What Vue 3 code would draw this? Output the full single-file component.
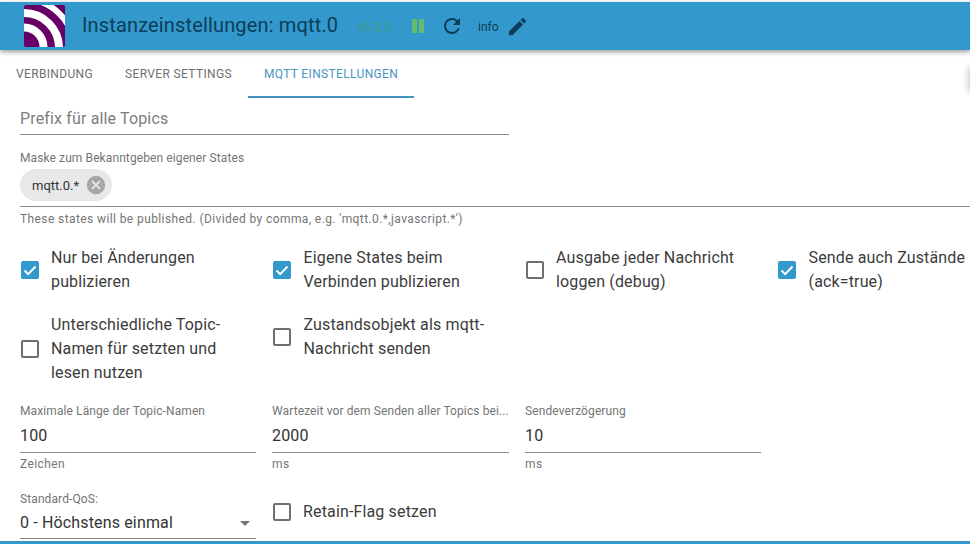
<script setup>
const tabs = [
  { label: 'Verbindung', active: false },
  { label: 'Server settings', active: false },
  { label: 'MQTT Einstellungen', active: true }
];

const flags = [
  { label: 'Nur bei Änderungen publizieren', checked: true },
  { label: 'Eigene States beim Verbinden publizieren', checked: true },
  { label: 'Ausgabe jeder Nachricht loggen (debug)', checked: false },
  { label: 'Sende auch Zustände (ack=true)', checked: true },
  { label: 'Unterschiedliche Topic-Namen für setzten und lesen nutzen', checked: false },
  { label: 'Zustandsobjekt als mqtt-Nachricht senden', checked: false }
];

const numbers = [
  { label: 'Maximale Länge der Topic-Namen', value: '100', unit: 'Zeichen' },
  { label: 'Wartezeit vor dem Senden aller Topics bei...', value: '2000', unit: 'ms' },
  { label: 'Sendeverzögerung', value: '10', unit: 'ms' }
];
</script>

<template>
  <div class="page">
    <header class="topbar">
      <svg class="logo" viewBox="0 0 41 42" width="41" height="42">
        <clipPath id="logo-clip">
          <rect width="41" height="42" rx="2" />
        </clipPath>
        <g clip-path="url(#logo-clip)">
          <rect width="41" height="42" fill="#660066" />
          <g fill="none" stroke="#fff">
            <circle cx="0" cy="42" r="19.5" stroke-width="8" />
            <circle cx="0" cy="43" r="35" stroke-width="8" />
            <circle cx="0" cy="44" r="50" stroke-width="6" />
          </g>
        </g>
      </svg>
      <h1 class="title">Instanzeinstellungen: mqtt.0</h1>
      <span class="version">v5.2.0</span>
      <svg class="pause" viewBox="0 0 12 14" width="12" height="14">
        <rect x="0" y="0" width="5" height="14" fill="#66bb6a" />
        <rect x="7" y="0" width="5" height="14" fill="#66bb6a" />
      </svg>
      <svg class="reload" viewBox="0 0 24 24" width="24" height="24">
        <path d="M17.65 6.35A7.95 7.95 0 0 0 12 4a8 8 0 1 0 7.73 10h-2.08A6 6 0 1 1 12 6c1.66 0 3.14.69 4.22 1.78L13 11h7V4l-2.35 2.35z" fill="#0d3d59" />
      </svg>
      <span class="info">info</span>
      <svg class="edit" viewBox="0 0 24 24" width="23" height="23">
        <path d="M3 17.25V21h3.75L17.81 9.94l-3.75-3.75L3 17.25zM20.71 7.04a1 1 0 0 0 0-1.41l-2.34-2.34a1 1 0 0 0-1.41 0l-1.83 1.83 3.75 3.75 1.83-1.83z" fill="#0d3d59" />
      </svg>
    </header>

    <nav class="tabs">
      <div v-for="tab in tabs" :key="tab.label" class="tab" :class="{ active: tab.active }">{{ tab.label }}</div>
    </nav>
    <div class="edge-shadow"></div>

    <main class="content">
      <div class="field prefix">
        <div class="input placeholder">Prefix für alle Topics</div>
      </div>

      <div class="mask">
        <div class="small-label">Maske zum Bekanntgeben eigener States</div>
        <div class="chip-row">
          <span class="chip">
            mqtt.0.*
            <svg viewBox="0 0 24 24" width="22" height="22">
              <path d="M12 2a10 10 0 1 0 0 20 10 10 0 0 0 0-20zm5 13.59L15.59 17 12 13.41 8.41 17 7 15.59 10.59 12 7 8.41 8.41 7 12 10.59 15.59 7 17 8.41 13.41 12 17 15.59z" fill="#a6a6a6" />
            </svg>
          </span>
        </div>
        <div class="helper">These states will be published. (Divided by comma, e.g. 'mqtt.0.*,javascript.*')</div>
      </div>

      <div class="flag-grid">
        <label v-for="flag in flags" :key="flag.label" class="flag">
          <span class="box" :class="{ checked: flag.checked }">
            <svg v-if="flag.checked" viewBox="0 0 18 18" width="18" height="18">
              <path d="M3.5 9.5l3.7 3.6 7.3-7.6" fill="none" stroke="#fff" stroke-width="2" />
            </svg>
          </span>
          <span class="flag-text">{{ flag.label }}</span>
        </label>
      </div>

      <div class="number-grid">
        <div v-for="num in numbers" :key="num.label" class="number">
          <div class="small-label">{{ num.label }}</div>
          <div class="number-value">{{ num.value }}</div>
          <div class="helper">{{ num.unit }}</div>
        </div>
      </div>

      <div class="qos-row">
        <div class="qos">
          <div class="small-label">Standard-QoS:</div>
          <div class="select">
            0 - Höchstens einmal
            <span class="arrow"></span>
          </div>
        </div>
        <label class="flag retain">
          <span class="box"></span>
          <span class="flag-text">Retain-Flag setzen</span>
        </label>
      </div>
    </main>

    <div class="bottom-bar"></div>
  </div>
</template>

<style>
html, body {
  margin: 0;
  background: #fff;
  overflow: hidden;
}
</style>

<style scoped>
.page {
  position: relative;
  width: 970px;
  height: 544px;
  overflow: hidden;
  font-family: Roboto, "Liberation Sans", sans-serif;
  color: #333;
  padding-top: 2px;
  box-sizing: border-box;
}

.topbar {
  position: relative;
  z-index: 1;
  height: 48px;
  background: #3399cc;
  box-shadow: 0 2px 5px rgba(0, 0, 0, 0.4);
  display: flex;
  align-items: center;
}

.logo {
  margin-left: 24px;
  flex: none;
}

.title {
  margin: 0 0 2px 17px;
  width: 255px;
  font-size: 20px;
  font-weight: 400;
  letter-spacing: 0.15px;
  color: #0d3d59;
  white-space: nowrap;
}

.version {
  margin: 2px 0 0 20px;
  width: 34px;
  font-size: 12px;
  letter-spacing: 0.4px;
  color: #3a9a80;
}

.pause {
  margin-left: 21px;
}

.reload {
  margin-left: 16px;
}

.info {
  margin: 1px 0 0 14px;
  font-size: 12px;
  color: #0d3d59;
}

.edit {
  margin-left: 7px;
}

.tabs {
  display: flex;
  height: 48px;
}

.tab {
  padding: 0 16px;
  display: flex;
  align-items: center;
  font-size: 12px;
  letter-spacing: 0.35px;
  text-transform: uppercase;
  color: #6f6f6f;
  box-sizing: border-box;
  height: 48px;
}

.tab.active {
  color: #4a94bf;
  border-bottom: 2px solid #4593bf;
  padding-top: 2px;
}

.edge-shadow {
  position: absolute;
  right: -6px;
  top: 66px;
  width: 8px;
  height: 26px;
  border-radius: 4px;
  background: #ccc;
  filter: blur(3px);
}

.content {
  padding: 0 0 0 20px;
}

.prefix {
  width: 489px;
  padding-top: 9px;
}

.input {
  height: 27px;
  border-bottom: 1px solid #8c8c8c;
  font-size: 16px;
  line-height: 24px;
  letter-spacing: 0.15px;
}

.placeholder {
  color: #7d7d7d;
}

.mask {
  margin-top: 15px;
}

.small-label {
  font-size: 12px;
  line-height: 16px;
  letter-spacing: 0.1px;
  color: #757575;
  white-space: nowrap;
}

.chip-row {
  border-bottom: 1px solid #8c8c8c;
  height: 37px;
  margin-top: 3px;
}

.chip {
  display: inline-flex;
  align-items: center;
  height: 32px;
  border-radius: 16px;
  background: #e8e8e8;
  padding: 0 5px 0 12px;
  font-size: 13px;
  gap: 6px;
  color: #333;
}

.chip svg {
  flex: none;
}

.helper {
  margin-top: 5px;
  font-size: 12px;
  line-height: 14px;
  color: #757575;
  letter-spacing: 0.4px;
}

.flag-grid {
  margin-top: 20px;
  display: grid;
  grid-template-columns: repeat(4, 252.5px);
  row-gap: 19px;
  align-items: start;
}

.flag {
  display: flex;
  align-items: center;
  gap: 12.5px;
  padding-right: 20px;
}

.box {
  flex: none;
  width: 18px;
  height: 18px;
  margin-left: 0.5px;
  box-sizing: border-box;
  border: 2px solid #6f6f6f;
  border-radius: 2px;
  display: block;
}

.box.checked {
  background: #3399cc;
  border: none;
}

.box svg {
  display: block;
}

.flag-text {
  font-size: 16px;
  line-height: 24px;
  letter-spacing: 0.15px;
  color: #3c3c3c;
}

.number-grid {
  margin-top: 18px;
  display: grid;
  grid-template-columns: 236px 237px 236px;
  column-gap: 16px;
}

.number-value {
  height: 32px;
  margin-top: 1px;
  font-size: 16px;
  line-height: 31px;
  letter-spacing: 0.15px;
  border-bottom: 1px solid #8c8c8c;
}

.number .helper {
  margin-top: 4px;
}

.qos-row {
  margin-top: 20px;
  display: flex;
  gap: 16px;
  align-items: flex-start;
}

.qos {
  width: 236px;
  flex: none;
}

.select {
  position: relative;
  height: 31px;
  line-height: 32px;
  font-size: 16px;
  letter-spacing: 0.15px;
  border-bottom: 1px solid #8c8c8c;
  color: #333;
}

.arrow {
  position: absolute;
  right: 6px;
  top: 14px;
  width: 0;
  height: 0;
  border-left: 5px solid transparent;
  border-right: 5px solid transparent;
  border-top: 5px solid #757575;
}

.retain {
  margin-top: 9px;
}

.bottom-bar {
  position: absolute;
  left: 0;
  right: 0;
  bottom: 0;
  height: 3px;
  background: #3399cc;
}
</style>
